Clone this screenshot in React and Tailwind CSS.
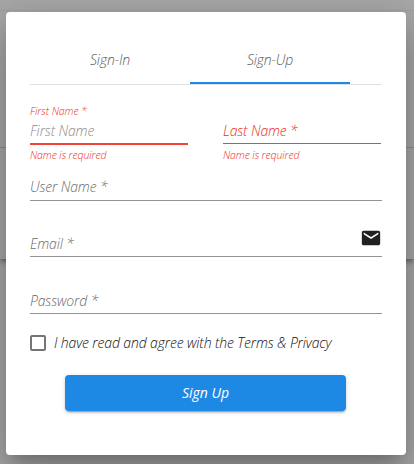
import React from "react";

function Field({ label, className, labelClass = "pb-[2px]", children }) {
  return (
    <div className={`flex w-[352px] items-end justify-between border-b border-[#949494] ${className}`}>
      <span className={`text-[14px] leading-5 text-[#6c6c6c] ${labelClass}`}>{label}</span>
      {children}
    </div>
  );
}

function Tab({ label, active }) {
  return (
    <div
      className={`flex h-12 w-[160px] items-center justify-center border-b-2 text-[14px] text-[#5c5c5c] ${
        active ? "border-[#1e88e5]" : "border-transparent"
      }`}
    >
      {label}
    </div>
  );
}

export default function App() {
  return (
    <div
      className="relative h-[464px] w-[414px] overflow-hidden bg-[#a8a8a8] font-light italic tracking-[-0.14px]"
      style={{ fontFamily: '"Open Sans", sans-serif' }}
    >
      <div className="flex h-full flex-col">
        <div className="h-[11px] shrink-0 border-b border-[#a0a0a0]" />
        <div className="h-[137px] shrink-0 border-b border-[#929292]" />
        <div className="h-[111px] shrink-0 shadow-[0_2px_4px_-1px_rgba(0,0,0,0.3),0_4px_5px_0_rgba(0,0,0,0.18)]" />
      </div>

      <div className="absolute top-3 left-1.5 flex h-[443px] w-[400px] flex-col rounded-[4px] bg-white p-6 shadow-[0_11px_15px_-7px_rgba(0,0,0,0.2),0_24px_38px_3px_rgba(0,0,0,0.14),0_9px_46px_8px_rgba(0,0,0,0.12)]">
        <div className="flex h-[49px] shrink-0 border-b border-[#e0e0e0]">
          <Tab label="Sign-In" />
          <Tab label="Sign-Up" active />
        </div>

        <div className="flex h-[78px] shrink-0 gap-[35px] pt-[18px] text-[#f02a1c]">
          <div className="w-[158px]">
            <div className="h-[18px] text-[10.5px] leading-4 tracking-[-0.05px]">First Name *</div>
            <div className="flex h-[24px] items-start border-b-2 border-[#f44336] text-[14px] leading-5 text-[#8c8c8c]">
              First Name
            </div>
            <div className="pt-[2px] text-[10.5px] leading-4 tracking-[-0.11px]">Name is required</div>
          </div>
          <div className="w-[158px]">
            <div className="flex h-[41px] items-end border-b border-[#f44336] pb-[2px] text-[14px] leading-5">
              Last Name *
            </div>
            <div className="pt-[3px] text-[10.5px] leading-4 tracking-[-0.11px]">Name is required</div>
          </div>
        </div>

        <Field label="User Name *" className="h-[38px] shrink-0" labelClass="pb-[3px]" />
        <Field label="Email *" className="h-[56px] shrink-0">
          <svg viewBox="0 0 24 24" className="mb-[7px] h-[22px] w-[22px]" fill="#212121">
            <path d="M20 4H4c-1.1 0-1.99.9-1.99 2L2 18c0 1.1.9 2 2 2h16c1.1 0 2-.9 2-2V6c0-1.1-.9-2-2-2zm0 4l-8 5-8-5V6l8 5 8-5v2z" />
          </svg>
        </Field>
        <Field label="Password *" className="h-[57px] shrink-0" />

        <label className="mt-[19px] flex h-5 shrink-0 items-center gap-2">
          <span className="h-4 w-4 rounded-[2px] border-2 border-[#757575]" />
          <span className="text-[14px] leading-5 text-[#111111]">I have read and agree with the Terms &amp; Privacy</span>
        </label>

        <button className="mt-[22px] ml-[35px] flex h-9 w-[281px] shrink-0 items-center justify-center rounded-[4px] bg-[#1e88e5] pb-px text-[14px] font-normal italic tracking-normal text-white shadow-[0_3px_1px_-2px_rgba(0,0,0,0.2),0_2px_2px_0_rgba(0,0,0,0.14),0_1px_5px_0_rgba(0,0,0,0.12)]">
          Sign Up
        </button>
      </div>
    </div>
  );
}
